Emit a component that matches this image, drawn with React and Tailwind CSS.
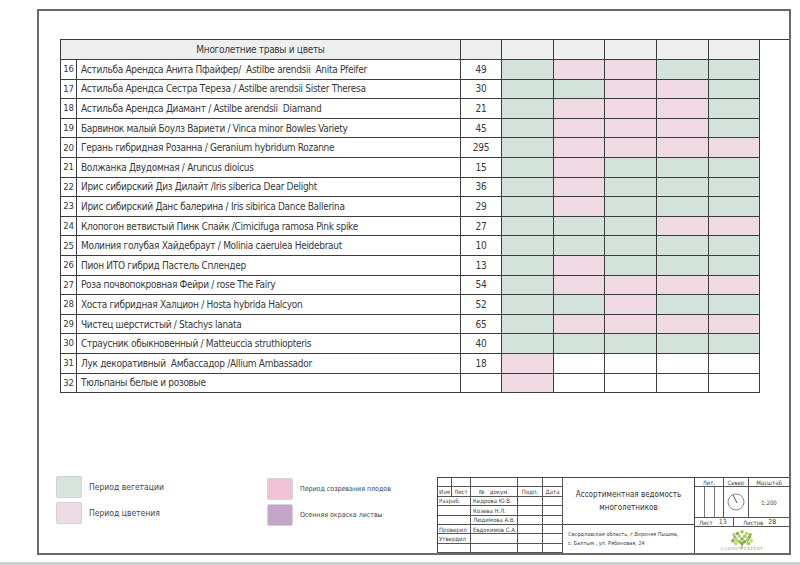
import React from "react";

const rows = [
  [16, "Астильба Арендса Анита Пфайфер/  Astilbe arendsii  Anita Pfeifer", "49", "GPPGG"],
  [17, "Астильба Арендса Сестра Тереза / Astilbe arendsii Sister Theresa", "30", "GGPPG"],
  [18, "Астильба Арендса Диамант / Astilbe arendsii  Diamand", "21", "GPPPG"],
  [19, "Барвинок малый Боулз Вариети / Vinca minor Bowles Variety", "45", "GPPPG"],
  [20, "Герань гибридная Розанна / Geranium hybridum Rozanne", "295", "GPPPP"],
  [21, "Волжанка Двудомная / Aruncus dioicus", "15", "GPGGG"],
  [22, "Ирис сибирский Диз Дилайт /Iris siberica Dear Delight", "36", "GPGGG"],
  [23, "Ирис сибирский Данс балерина / Iris sibirica Dance Ballerina", "29", "GPGGG"],
  [24, "Клопогон ветвистый Пинк Спайк /Cimicifuga ramosa Pink spike", "27", "GGGPP"],
  [25, "Молиния голубая Хайдебраут / Molinia caerulea Heidebraut", "10", "GGGGG"],
  [26, "Пион ИТО гибрид Пастель Сплендер", "13", "GPGGG"],
  [27, "Роза почвопокровная Фейри / rose The Fairy", "54", "GPPPP"],
  [28, "Хоста гибридная Халцион / Hosta hybrida Halcyon", "52", "GGPGG"],
  [29, "Чистец шерстистый / Stachys lanata", "65", "GPPPP"],
  [30, "Страусник обыкновенный / Matteuccia struthiopteris", "40", "GGGGG"],
  [31, "Лук декоративный  Амбассадор /Allium Ambassador", "18", "PWWWW"],
  [32, "Тюльпаны белые и розовые", "", "PWWWW"],
];

const fill = { G: "bg-[#d3e2db]", P: "bg-[#f0dbe5]", W: "bg-white" };

const cell = "border-r border-b border-[#3c3c3c]";

function PlantTable() {
  return (
    <div className="grid grid-cols-[16px_384px_41px_52px_51px_52px_52px_51px] grid-rows-[20px_repeat(17,19.6px)] border-l border-t border-[#3c3c3c] text-[10px] tracking-[-0.3px] text-[#383838]">
      <div className={`${cell} col-span-2 bg-[#eef0f0] flex items-center justify-center`}>
        Многолетние травы и цветы
      </div>
      {[0, 1, 2, 3, 4, 5].map((i) => (
        <div key={i} className={`${cell} bg-[#eef0f0]`} />
      ))}
      {rows.map(([n, name, qty, months]) => (
        <React.Fragment key={n}>
          <div className={`${cell} flex items-center justify-center text-[9.5px]`}>{n}</div>
          <div className={`${cell} flex items-center pl-[4px] whitespace-pre`}>{name}</div>
          <div className={`${cell} flex items-center justify-center`}>{qty}</div>
          {months.split("").map((m, i) => (
            <div key={i} className={`${cell} ${fill[m]}`} />
          ))}
        </React.Fragment>
      ))}
    </div>
  );
}

function Legend() {
  const item = (color, label, small) => (
    <div className="flex items-center gap-[7px]">
      <div className={`w-[26px] h-[22px] rounded-[2px] border border-[#d4d4d4] ${color}`} />
      <span className={small ? "text-[7px]" : "text-[8.5px]"}>{label}</span>
    </div>
  );
  return (
    <div className="flex gap-[103px] text-[#444] pb-[27px] ml-[17px]">
      <div className="flex flex-col gap-[4px]">
        {item("bg-[#d6e4dd]", "Период вегетации")}
        {item("bg-[#efdbe5]", "Период цветения")}
      </div>
      <div className="flex flex-col gap-[4px] pt-[2px]">
        {item("bg-[#efc3d3]", "Период созревания плодов", true)}
        {item("bg-[#c4a4c9]", "Осенняя окраска листвы", true)}
      </div>
    </div>
  );
}

function Logo() {
  const dots = [
    [0, -9], [-5, -7], [5, -7], [-8, -3], [8, -3], [-3, -4], [3, -4], [0, -1],
    [-6, 0], [6, 0], [-10, 1], [10, 1], [-3, 2], [3, 2], [-7, 4], [7, 4], [0, 4], [-9, -6], [9, -6],
  ];
  return (
    <div className="flex flex-col items-center">
      <svg width="34" height="20" viewBox="-14 -12 28 22">
        <path d="M0 10 L0 2 M0 5 L-3 1 M0 4 L3 0" stroke="#8a6a3a" strokeWidth="1" fill="none" />
        {dots.map(([x, y], i) => (
          <circle key={i} cx={x} cy={y} r="2" fill={i % 3 === 0 ? "#9fbf4a" : i % 3 === 1 ? "#7da83a" : "#b9cf6a"} opacity="0.9" />
        ))}
      </svg>
      <span className="text-[4.5px] tracking-[0.5px] text-[#b59a62] leading-none -mt-[2px] font-['Liberation_Serif',serif]">
        GARDEN EXPERT
      </span>
    </div>
  );
}

function TitleBlock() {
  const c = "border-r border-b border-[#555] flex items-center overflow-hidden whitespace-nowrap";
  const people = [
    ["Разраб.", "Кедрова Ю.В."],
    ["", "Козева Н.Л."],
    ["", "Людимова А.В."],
    ["Проверил", "Евдокимов С.А."],
    ["Утвердил", ""],
    ["", ""],
  ];
  return (
    <div className="flex border-l border-t border-[#444] h-[76px] text-[6px] text-[#444] bg-white">
      <div className="w-[125px] grid grid-cols-[14px_19px_47px_25px_20px] grid-rows-[repeat(8,1fr)]">
        {[0, 1, 2, 3, 4].map((i) => (
          <div key={i} className={c} />
        ))}
        <div className={`${c} pl-[1px]`}>Изм</div>
        <div className={`${c} pl-[2px]`}>Лист</div>
        <div className={`${c} justify-center`}>№&nbsp;&nbsp;&nbsp;докум.</div>
        <div className={`${c} justify-center`}>Подп.</div>
        <div className={`${c} justify-center`}>Дата</div>
        {people.map(([role, name], i) => (
          <React.Fragment key={i}>
            <div className={`${c} col-span-2 pl-[1px]`}>{role}</div>
            <div className={`${c} pl-[2px]`}>{name}</div>
            <div className={c} />
            <div className={c} />
          </React.Fragment>
        ))}
      </div>
      <div className="w-[132px] flex flex-col border-r border-[#444]">
        <div className="h-[47px] border-b border-[#444] flex flex-col items-center justify-center text-[8px] leading-[13px] text-[#333]">
          <span>Ассортиментная ведомость</span>
          <span>многолетников</span>
        </div>
        <div className="flex-1 flex flex-col justify-center pl-[5px] text-[5.5px] leading-[9px]">
          <span>Свердловская область, г.Верхняя Пышма,</span>
          <span>с. Балтым , ул. Рябиновая, 24</span>
        </div>
      </div>
      <div className="flex-1 flex flex-col">
        <div className="grid grid-cols-[29px_25px_1fr] grid-rows-[9px_31px]">
          <div className={`${c} justify-center`}>Лит.</div>
          <div className={`${c} justify-center`}>Север</div>
          <div className="border-b border-[#555] flex items-center justify-center">Масштаб</div>
          <div className={`${c} justify-center gap-[9px]`}>
            <div className="w-px h-full bg-[#777]" />
            <div className="w-px h-full bg-[#777]" />
          </div>
          <div className={`${c} justify-center`}>
            <svg width="18" height="18" viewBox="-9 -9 18 18">
              <circle cx="0" cy="0" r="8" fill="none" stroke="#555" strokeWidth="0.7" />
              <line x1="-3" y1="-7" x2="1" y2="1" stroke="#444" strokeWidth="0.9" />
            </svg>
          </div>
          <div className="border-b border-[#555] flex items-center justify-center">1:200</div>
        </div>
        <div className="flex h-[9px] border-b border-[#555]">
          <div className="w-[39px] border-r border-[#555] flex items-center pl-[4px] gap-[6px]">
            <span>Лист</span>
            <span className="text-[7px]">13</span>
          </div>
          <div className="flex-1 flex items-center pl-[9px] gap-[5px]">
            <span>Листов</span>
            <span className="text-[7px]">28</span>
          </div>
        </div>
        <div className="flex-1 flex items-center justify-center">
          <Logo />
        </div>
      </div>
    </div>
  );
}

export default function App() {
  return (
    <div className="w-[800px] h-[565px] bg-white relative overflow-hidden font-['Liberation_Sans_Narrow','DejaVu_Sans_Condensed',sans-serif]">
      <div className="ml-[37px] mt-[9px] w-[754px] h-[546px] border-2 border-[#6a6a6a] flex flex-col">
        <div className="ml-[21px] mt-[28px]">
          <PlantTable />
        </div>
        <div className="flex-1" />
        <div className="flex items-end justify-between">
          <Legend />
          <div className="w-[352px]">
            <TitleBlock />
          </div>
        </div>
      </div>
      <div className="absolute left-0 right-0 bottom-0 h-[3px] bg-[#cfcfcf]" />
    </div>
  );
}
